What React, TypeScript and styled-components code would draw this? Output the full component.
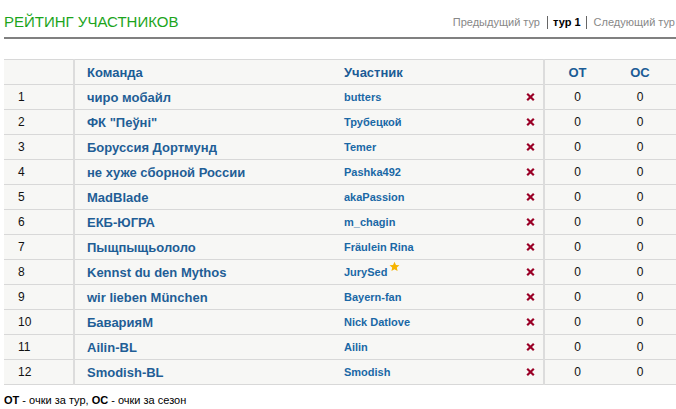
import React from "react";
import styled, { createGlobalStyle } from "styled-components";

const Global = createGlobalStyle`
  html, body { margin: 0; padding: 0; background: #fff; overflow: hidden; }
  body { font-family: "Liberation Sans", Arial, sans-serif; }
`;

const Page = styled.div`
  width: 676px;
  padding: 0 0 0 4px;
  box-sizing: border-box;
  overflow: hidden;
`;

const Head = styled.div`
  display: flex;
  align-items: flex-end;
  justify-content: space-between;
  height: 37px;
  border-bottom: 2px solid #808080;
  box-sizing: content-box;
`;

const Title = styled.h1`
  margin: 0 0 6px 0;
  font-size: 15px;
  font-weight: normal;
  color: #1ca41c;
  white-space: nowrap;
  line-height: 18px;
`;

const Nav = styled.div`
  display: flex;
  align-items: center;
  white-space: nowrap;
  font-size: 11px;
  margin-bottom: 8px;
  line-height: 13px;
  margin-right: 1px;
`;

const NavLink = styled.span`
  color: #888;
`;

const Current = styled.span`
  color: #000;
  font-weight: bold;
  border-left: 1px solid #666;
  border-right: 1px solid #666;
  padding: 0 5px 0 5px;
  margin: 0 7px 0 7px;
`;

const Table = styled.table`
  margin-top: 20px;
  border-collapse: collapse;
  width: 680px;
  table-layout: fixed;
  font-size: 12px;
`;

const Th = styled.th<{ $w: number; $center?: boolean; $line?: boolean; $pl?: number; $pr?: number }>`
  width: ${(p) => p.$w}px;
  height: 25px;
  padding: 0 ${(p) => p.$pr ?? 0}px 0 ${(p) => p.$pl ?? 0}px;
  background: #f7f7f5;
  border-top: 1px solid #d8d8d8;
  border-bottom: 1px solid #d8d8d8;
  border-right: ${(p) => (p.$line ? "2px solid #dcdcdc" : "none")};
  text-align: ${(p) => (p.$center ? "center" : "left")};
  font-size: 13px;
  font-weight: bold;
  color: #1b5c96;
  box-sizing: border-box;
`;

const Td = styled.td<{ $center?: boolean; $line?: boolean; $pl?: number; $pr?: number }>`
  height: 25px;
  padding: 0 ${(p) => p.$pr ?? 0}px 0 ${(p) => p.$pl ?? 0}px;
  background: #f7f7f5;
  border-bottom: 1px solid #d8d8d8;
  border-right: ${(p) => (p.$line ? "2px solid #dcdcdc" : "none")};
  text-align: ${(p) => (p.$center ? "center" : "left")};
  color: #111;
  white-space: nowrap;
  box-sizing: border-box;
`;

const Team = styled.span`
  font-size: 13px;
  font-weight: bold;
  color: #1f5e96;
`;

const PlayerCell = styled.div`
  display: flex;
  align-items: center;
  justify-content: space-between;
  padding-right: 8px;
`;

const Player = styled.span`
  font-size: 11px;
  font-weight: bold;
  color: #1a68a6;
  display: inline-flex;
  align-items: flex-start;
`;

const Star = styled.svg`
  margin-left: 2px;
  margin-top: -5px;
`;

const Footer = styled.div`
  margin-top: 9px;
  font-size: 11px;
  color: #000;
  b { font-weight: bold; }
`;

const Cross = () => (
  <svg width="9" height="8" viewBox="0 0 9 8">
    <path d="M1.2 0.8 L7.8 7.2 M7.8 0.8 L1.2 7.2" stroke="#9a0026" strokeWidth="2.2" strokeLinecap="butt" />
  </svg>
);

const rows: [string, string, boolean?][] = [
  ["чиро мобайл", "butters"],
  ["ФК \"Пеўнi\"", "Трубецкой"],
  ["Боруссия Дортмунд", "Temer"],
  ["не хуже сборной России", "Pashka492"],
  ["MadBlade", "akaPassion"],
  ["ЕКБ-ЮГРА", "m_chagin"],
  ["Пыщпыщьололо", "Fräulein Rina"],
  ["Kennst du den Mythos", "JurySed", true],
  ["wir lieben München", "Bayern-fan"],
  ["БаварияМ", "Nick Datlove"],
  ["Ailin-BL", "Ailin"],
  ["Smodish-BL", "Smodish"],
];

export default function App() {
  return (
    <Page>
      <Global />
      <Head>
        <Title>РЕЙТИНГ УЧАСТНИКОВ</Title>
        <Nav>
          <NavLink>Предыдущий тур</NavLink>
          <Current>тур 1</Current>
          <NavLink>Следующий тур</NavLink>
        </Nav>
      </Head>
      <Table>
        <thead>
          <tr>
            <Th $w={70} $line />
            <Th $w={258} $pl={12}>Команда</Th>
            <Th $w={212} $line $pl={12}>Участник</Th>
            <Th $w={66} $center>ОТ</Th>
            <Th $w={74} $center $pr={14}>ОС</Th>
          </tr>
        </thead>
        <tbody>
          {rows.map(([team, player, star], i) => (
            <tr key={i}>
              <Td $line $pl={14}>{i + 1}</Td>
              <Td $pl={12}><Team>{team}</Team></Td>
              <Td $line $pl={12}>
                <PlayerCell>
                  <Player>
                    {player}
                    {star && (
                      <Star width="11" height="11" viewBox="0 0 24 24">
                        <path d="M12 1.5l3.2 7 7.6.8-5.7 5.1 1.6 7.5L12 18l-6.7 3.9 1.6-7.5L1.2 9.3l7.6-.8z" fill="#f6b400" />
                      </Star>
                    )}
                  </Player>
                  <Cross />
                </PlayerCell>
              </Td>
              <Td $center>0</Td>
              <Td $center $pr={14}>0</Td>
            </tr>
          ))}
        </tbody>
      </Table>
      <Footer>
        <b>ОТ</b> - очки за тур, <b>ОС</b> - очки за сезон
      </Footer>
    </Page>
  );
}
